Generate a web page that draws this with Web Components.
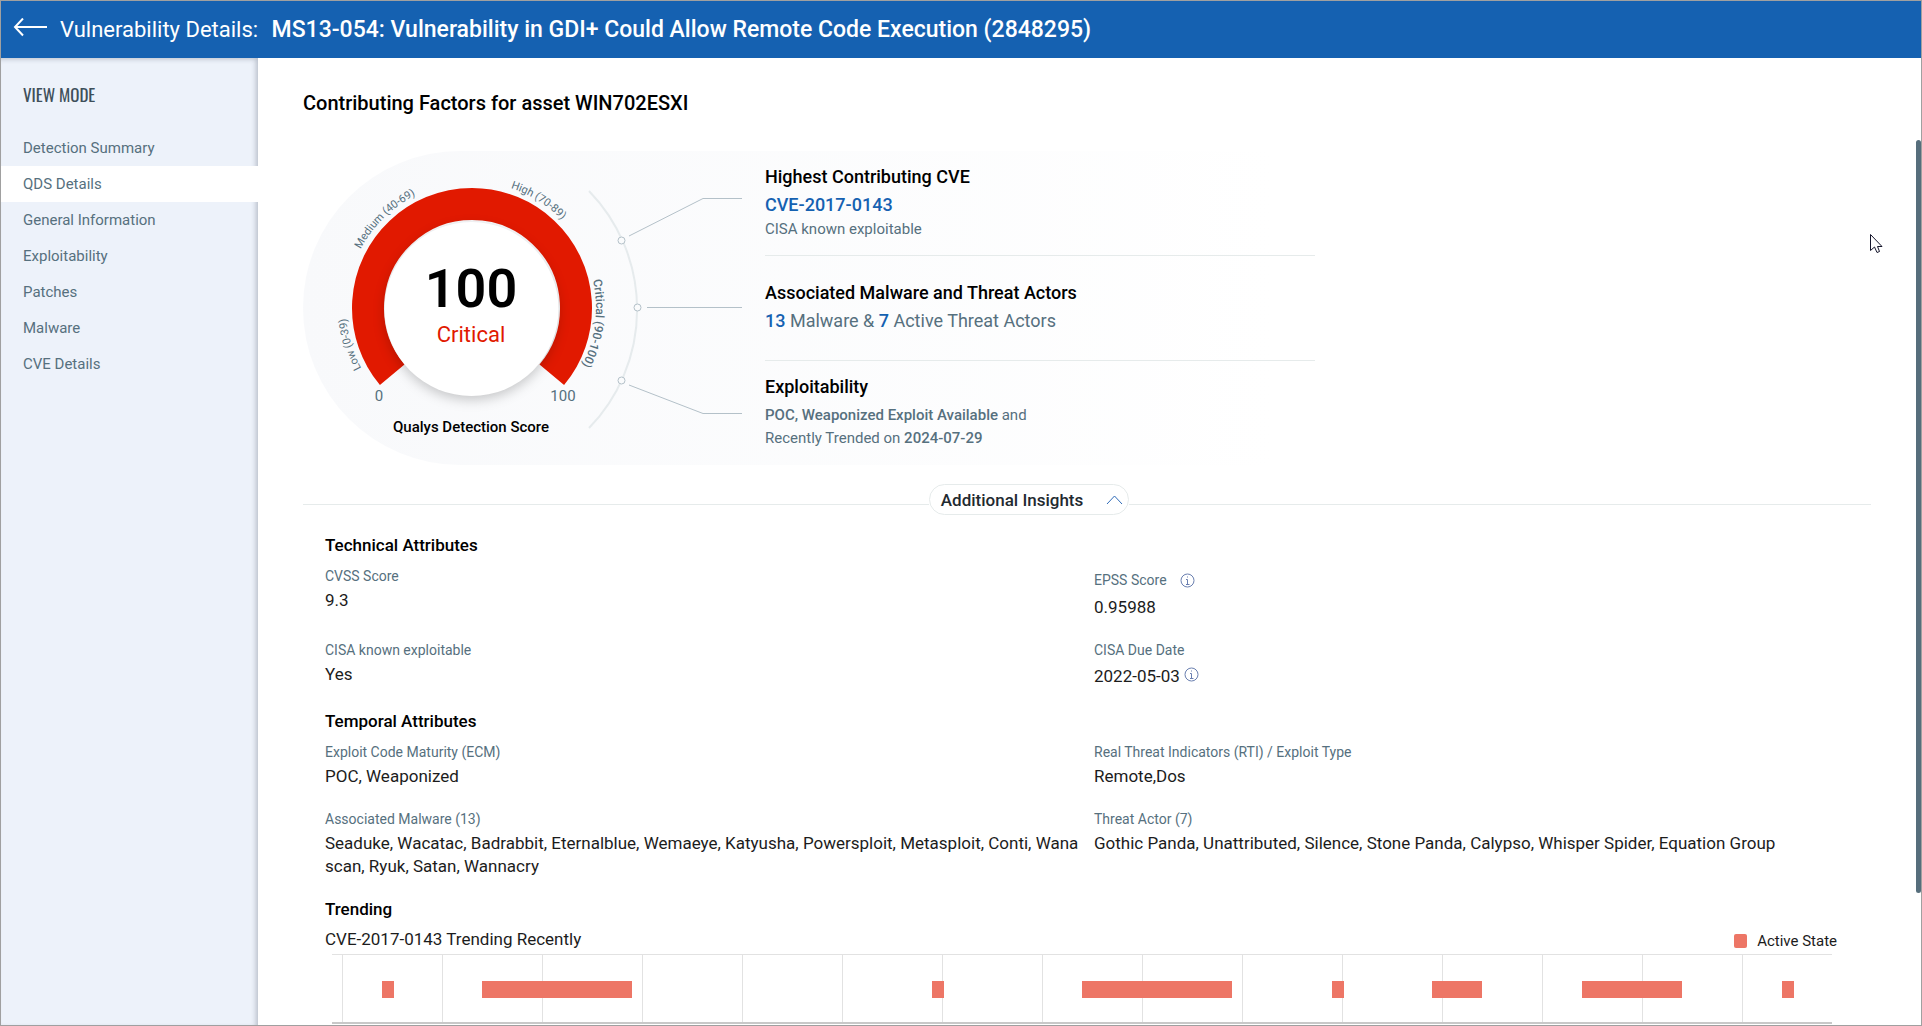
<!DOCTYPE html>
<html lang="en">
<head>
<meta charset="utf-8">
<title>Vulnerability Details</title>
<style>
  body {
    margin: 0;
    font-family: Roboto, "Liberation Sans", sans-serif;
    color: #1c1c1c;
  }
</style>
</head>
<body>
<vuln-app></vuln-app>

<script>
const define = (name, html, setup) => {
  const template = document.createElement("template");
  template.innerHTML = html;

  customElements.define(name, class extends HTMLElement {
    constructor() {
      super();
      this.attachShadow({ mode: "open" });
      this.shadowRoot.appendChild(template.content.cloneNode(true));
    }

    connectedCallback() {
      if (setup) setup(this, this.shadowRoot);
    }
  });
};

define("page-header", `
  <style>
    :host {
      display: flex;
      align-items: center;
      height: 57px;
      padding-left: 11px;
      background: #1561b1;
      color: #ffffff;
      font-size: 22px;
      line-height: 28px;
    }

    button {
      display: flex;
      padding: 0;
      margin-right: 12px;
      border: 0;
      background: none;
      color: inherit;
      cursor: pointer;
    }

    h1 {
      margin: 0;
      font-size: inherit;
      font-weight: 400;
      white-space: nowrap;
    }

    ::slotted(strong) {
      margin-left: 8px;
      font-size: 23px;
      font-weight: 500;
    }
  </style>
  <button aria-label="Back">
    <svg width="36" height="24" viewBox="0 0 36 24" fill="none" stroke="currentColor" stroke-width="2">
      <path d="M11 0.500 L3 9 L11 17.500 M3 9 H35" />
    </svg>
  </button>
  <h1>Vulnerability Details: <slot></slot></h1>
`);

define("side-nav", `
  <style>
    :host {
      display: block;
      background: #edf2fa;
      box-shadow: inset -3px 2px 5px -1px rgba(60, 70, 90, 0.3);
    }

    h2 {
      margin: 0;
      padding: 23px 22px 21px;
      font-family: Oswald, "Roboto Condensed", "Liberation Sans Narrow", sans-serif;
      font-size: 17px;
      font-weight: 400;
      line-height: 28px;
      color: #3e4f5a;
    }
  </style>
  <h2>VIEW MODE</h2>
  <nav><slot></slot></nav>
`);

define("nav-item", `
  <style>
    :host {
      display: block;
    }

    a {
      display: block;
      padding: 0 22px;
      font-size: 15px;
      line-height: 36px;
      color: #56707e;
      text-decoration: none;
    }

    :host([selected]) a {
      background: #ffffff;
    }
  </style>
  <a href="#"><slot></slot></a>
`);

define("score-gauge", `
  <style>
    :host {
      display: block;
    }

    svg {
      display: block;
    }

    .range {
      font-size: 11px;
      fill: #56707e;
    }

    .current {
      font-size: 12px;
      font-weight: 500;
    }

    .limit {
      font-size: 15px;
      fill: #56707e;
    }

    .score {
      font-size: 54px;
      font-weight: 600;
      fill: #000000;
    }

    .severity {
      font-size: 22px;
      fill: #e11900;
    }

    .caption {
      font-size: 15px;
      font-weight: 500;
      fill: #000000;
    }

    .disc {
      filter: drop-shadow(0 4px 6px rgba(0, 0, 0, 0.2));
    }
  </style>
  <svg width="440" height="314" viewBox="0 0 440 314" fill="none">
    <defs>
      <path id="labels" d="M169 283 A126 126 0 0 1 169 31 A126 126 0 0 1 169 283" />
      <path id="inner-labels" d="M169 281 A124 124 0 0 1 169 33 A124 124 0 0 1 169 281" />
    </defs>
    <path d="M89.200 223.700 A104 104 0 1 1 248.800 223.700" stroke="#e11900" stroke-width="32" />
    <circle class="disc" cx="168.500" cy="158" r="87" fill="#ffffff" />
    <text class="range"><textPath href="#labels" startOffset="135">Low (0-39)</textPath></text>
    <text class="range"><textPath href="#labels" startOffset="259">Medium (40-69)</textPath></text>
    <text class="range"><textPath href="#labels" startOffset="435">High (70-89)</textPath></text>
    <text class="range current"><textPath href="#inner-labels" startOffset="556">Critical (90-100)</textPath></text>
    <g text-anchor="middle">
      <text class="score" x="168" y="156">100</text>
      <text class="severity" x="168" y="191">Critical</text>
      <text class="limit" x="76" y="250">0</text>
      <text class="limit" x="260" y="250">100</text>
      <text class="caption" x="168" y="281">Qualys Detection Score</text>
    </g>
    <path d="M286 40 A170 170 0 0 1 286 277" stroke="#e6ebed" stroke-width="2" />
    <g stroke="#b4c1c9">
      <g fill="#fafbfc">
        <circle cx="318.500" cy="89.500" r="3.500" />
        <circle cx="334.500" cy="156.500" r="3.500" />
        <circle cx="318.500" cy="229.500" r="3.500" />
      </g>
      <path d="M326 85 L400 47.500 H439 M344 156.500 H439 M326 234 L400 262.500 H439" />
    </g>
  </svg>
`);

define("factor-item", `
  <style>
    :host {
      display: block;
      font-size: 15px;
      line-height: 23px;
      color: #56707e;
    }

    h3 {
      margin: 0;
      font-size: 18px;
      font-weight: 500;
      line-height: 28px;
      color: #000000;
    }

    ::slotted(.large) {
      font-size: 18px;
      line-height: 27px;
    }

    ::slotted(.note) {
      padding-top: 3px;
    }
  </style>
  <h3><slot name="title"></slot></h3>
  <slot></slot>
`);

define("factor-panel", `
  <style>
    :host {
      display: flex;
      width: 1012px;
      max-width: 100%;
      height: 314px;
      border-radius: 157px 0 0 157px;
      background: linear-gradient(90deg, #f8f9fb, #ffffff 96%);
    }

    .list {
      flex: 1;
      display: grid;
      grid-template-rows: 105px 105px 104px;
      margin-left: 22px;
    }

    factor-item {
      padding-top: 12px;
      border-bottom: 1px solid #e6ebeb;
    }

    factor-item + factor-item {
      padding-top: 23px;
    }

    factor-item:last-child {
      padding-top: 12px;
      border: 0;
    }

    a {
      color: #1561b1;
      font-weight: 500;
      text-decoration: none;
    }

    b {
      font-weight: 500;
    }
  </style>
  <score-gauge></score-gauge>
  <div class="list">
    <factor-item>
      <span slot="title">Highest Contributing CVE</span>
      <div class="large"><a href="#">CVE-2017-0143</a></div>
      <div>CISA known exploitable</div>
    </factor-item>
    <factor-item>
      <span slot="title">Associated Malware and Threat Actors</span>
      <div class="large"><a href="#">13</a> Malware &amp; <a href="#">7</a> Active Threat Actors</div>
    </factor-item>
    <factor-item>
      <span slot="title">Exploitability</span>
      <div class="note"><b>POC, Weaponized Exploit Available</b> and</div>
      <div>Recently Trended on <b>2024-07-29</b></div>
    </factor-item>
  </div>
`);

define("insights-toggle", `
  <style>
    :host {
      display: flex;
      align-items: center;
    }

    :host::before,
    :host::after {
      content: "";
      flex: 1 1 626px;
      height: 1px;
      margin-top: 10px;
      background: #e6ebeb;
    }

    :host::after {
      flex-basis: 742px;
    }

    button {
      display: flex;
      align-items: center;
      gap: 23px;
      height: 31px;
      padding: 0 5px 0 11px;
      border: 1px solid #e6ebeb;
      border-radius: 16px;
      background: #ffffff;
      font: 500 17px Roboto, sans-serif;
      color: #1f2a30;
      white-space: nowrap;
      cursor: pointer;
    }
  </style>
  <button aria-expanded="true">
    <slot></slot>
    <svg width="17" height="10" viewBox="0 0 17 10" fill="none" stroke="#2f6bb8">
      <path d="M1 9 L8.500 1 L16 9" />
    </svg>
  </button>
`);

define("info-icon", `
  <style>
    :host {
      display: inline-flex;
    }
  </style>
  <svg width="15" height="15" viewBox="0 0 15 15" fill="none" stroke="#6a7fb0">
    <circle cx="7.500" cy="7.500" r="6.500" />
    <path d="M6 6.500 H7.500 V11 M6 11.500 H9.500 M7 4 H8" />
  </svg>
`);

define("attribute-field", `
  <style>
    :host {
      display: block;
      font-size: 17px;
      line-height: 23px;
    }

    .label {
      display: flex;
      align-items: center;
      gap: 13px;
      font-size: 14px;
      line-height: 25px;
      color: #56707e;
    }

    .value {
      word-break: break-all;
    }

    :host([tall-label]) .label {
      line-height: 32px;
    }

    :host([tall-value]) .value {
      line-height: 27px;
    }
  </style>
  <div class="label"><slot name="label"></slot></div>
  <div class="value"><slot></slot></div>
`);

define("attribute-group", `
  <style>
    :host {
      display: block;
    }

    h3 {
      margin: 0 0 7px;
      font-size: 17px;
      font-weight: 500;
      line-height: 24px;
      color: #000000;
    }

    .fields {
      display: grid;
      grid-template-columns: 1fr 1fr;
      gap: 19px 14px;
    }
  </style>
  <h3><slot name="title"></slot></h3>
  <div class="fields"><slot></slot></div>
`);

define("trend-chart", `
  <style>
    :host {
      display: block;
    }

    .top {
      display: flex;
      justify-content: space-between;
      align-items: flex-start;
      font-size: 17px;
      line-height: 22px;
      color: #1c1c1c;
    }

    .legend {
      display: flex;
      align-items: center;
      gap: 10px;
      padding-top: 2px;
      font-size: 15px;
    }

    .legend::before {
      content: "";
      width: 13px;
      height: 14px;
      border-radius: 2px;
      background: #ed7666;
    }

    svg {
      display: block;
      width: calc(100% - 12px);
      height: 70px;
      margin: 2px 0 0 7px;
      border-top: 1px solid #e2e2e2;
      box-sizing: border-box;
    }
  </style>
  <div class="top">
    <slot></slot>
    <span class="legend">Active State</span>
  </div>
  <svg></svg>
`, (host, root) => {
  // 150 days across, a grid line every 10 days
  const days = 150;
  const pos = (day) => `${(day / days) * 100}%`;
  const active = [[5, 6.2], [15, 30], [60, 61.2], [75, 90], [100, 101.2], [110, 115], [125, 135], [145, 146.2]];

  let marks = "";
  for (let day = 1; day < days; day += 10) {
    marks += `<rect x="${pos(day)}" y="0" width="1" height="68" fill="#e2e2e2" />`;
  }
  for (const [from, to] of active) {
    marks += `<rect x="${pos(from)}" y="26" width="${pos(to - from)}" height="17" fill="#ed7666" />`;
  }
  marks += `<rect x="0" y="67" width="100%" height="2" fill="#c8c8c8" />`;
  root.querySelector("svg").innerHTML = marks;
});

define("vuln-app", `
  <style>
    :host {
      display: grid;
      grid-template: auto 1fr / 257px 1fr;
      position: relative;
      box-sizing: border-box;
      height: 100vh;
      border: 1px solid #a0a0a0;
      background: #ffffff;
      overflow: hidden;
    }

    page-header {
      grid-column: 1 / -1;
    }

    main {
      min-width: 0;
      min-height: 0;
      overflow: hidden;
      padding: 31px 50px 0 45px;
    }

    h2 {
      margin: 0 0 34px;
      font-size: 20px;
      font-weight: 500;
      line-height: 28px;
      color: #000000;
    }

    insights-toggle {
      margin-top: 19px;
    }

    .details {
      padding: 18px 22px 0 22px;
    }

    attribute-group + attribute-group {
      margin-top: 19px;
    }

    trend-chart {
      margin-right: 12px;
    }

    .scroll {
      position: absolute;
      top: 139px;
      right: 0;
      width: 5px;
      height: 753px;
      border-radius: 3px;
      background: #566e7c;
    }

    .pointer {
      position: absolute;
      top: 233px;
      right: 38px;
    }
  </style>
  <page-header><strong>MS13-054: Vulnerability in GDI+ Could Allow Remote Code Execution (2848295)</strong></page-header>
  <side-nav>
    <nav-item>Detection Summary</nav-item>
    <nav-item selected>QDS Details</nav-item>
    <nav-item>General Information</nav-item>
    <nav-item>Exploitability</nav-item>
    <nav-item>Patches</nav-item>
    <nav-item>Malware</nav-item>
    <nav-item>CVE Details</nav-item>
  </side-nav>
  <main>
    <h2>Contributing Factors for asset WIN702ESXI</h2>
    <factor-panel></factor-panel>
    <insights-toggle>Additional Insights</insights-toggle>
    <div class="details">
      <attribute-group>
        <span slot="title">Technical Attributes</span>
        <attribute-field><span slot="label">CVSS Score</span>9.3</attribute-field>
        <attribute-field tall-label><span slot="label">EPSS Score</span><info-icon slot="label"></info-icon>0.95988</attribute-field>
        <attribute-field><span slot="label">CISA known exploitable</span>Yes</attribute-field>
        <attribute-field tall-value><span slot="label">CISA Due Date</span>2022-05-03 <info-icon></info-icon></attribute-field>
      </attribute-group>
      <attribute-group>
        <span slot="title">Temporal Attributes</span>
        <attribute-field><span slot="label">Exploit Code Maturity (ECM)</span>POC, Weaponized</attribute-field>
        <attribute-field><span slot="label">Real Threat Indicators (RTI) / Exploit Type</span>Remote,Dos</attribute-field>
        <attribute-field><span slot="label">Associated Malware (13)</span>Seaduke, Wacatac, Badrabbit, Eternalblue, Wemaeye, Katyusha, Powersploit, Metasploit, Conti, Wanascan, Ryuk, Satan, Wannacry</attribute-field>
        <attribute-field><span slot="label">Threat Actor (7)</span>Gothic Panda, Unattributed, Silence, Stone Panda, Calypso, Whisper Spider, Equation Group</attribute-field>
      </attribute-group>
      <attribute-group>
        <span slot="title">Trending</span>
      </attribute-group>
      <trend-chart>CVE-2017-0143 Trending Recently</trend-chart>
    </div>
  </main>
  <div class="scroll"></div>
  <svg class="pointer" width="13" height="20" viewBox="0 0 13 20" fill="#ffffff" stroke="#15152b">
    <path d="M0.500 0.500 V16.500 L4.500 13 L7 18.500 L9.500 17.500 L7.500 12.500 H12 Z" />
  </svg>
`);
</script>
</body>
</html>
